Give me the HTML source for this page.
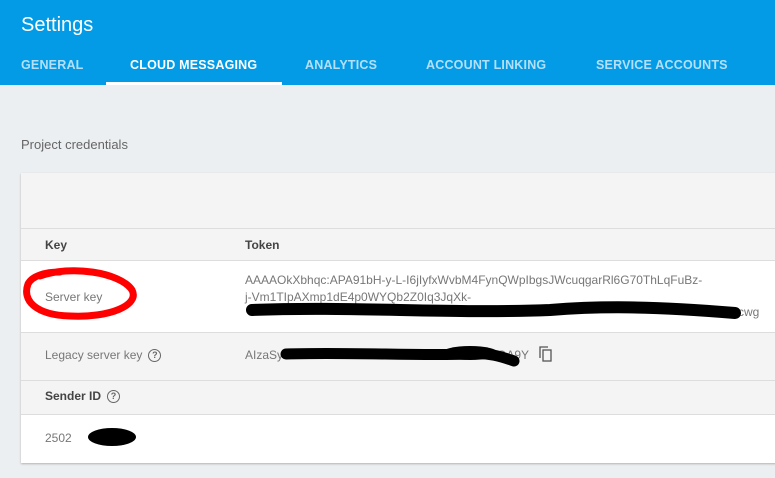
<!DOCTYPE html>
<html><head><meta charset="utf-8"><style>
*{margin:0;padding:0;box-sizing:border-box}
body{width:775px;height:478px;overflow:hidden;background:#eceff1;font-family:"Liberation Sans",sans-serif;position:relative}
.hdr{position:absolute;left:0;top:0;width:775px;height:85px;background:#039be5}
.title{position:absolute;left:21px;top:14px;color:#fff;font-size:20px}
.tab{position:absolute;top:58px;font-size:12.5px;font-weight:bold;color:#b3e0f8;letter-spacing:0.2px}
.ul{position:absolute;left:106px;top:82px;width:176px;height:3px;background:#fff}
.pc{position:absolute;left:21px;top:137px;font-size:13px;color:#666}
.card{position:absolute;left:21px;top:173px;width:760px;height:290px;background:#fff;box-shadow:0 1px 2px rgba(0,0,0,.25)}
.r{position:absolute;left:0;width:760px;border-bottom:1px solid #ddd}
.t{position:absolute;font-size:12px;color:#777}
.b{color:#444;font-weight:bold}
.q{display:inline-block;width:13px;height:13px;border:1.5px solid #666;border-radius:50%;font-size:9px;text-align:center;line-height:10px;color:#666;font-weight:bold;vertical-align:middle;margin-left:6px}
</style></head><body>
<div class="hdr">
<div class="title">Settings</div>
<div class="tab" style="left:21px">GENERAL</div>
<div class="tab" style="left:130px;color:#fff">CLOUD MESSAGING</div>
<div class="tab" style="left:305px">ANALYTICS</div>
<div class="tab" style="left:426px">ACCOUNT LINKING</div>
<div class="tab" style="left:596px">SERVICE ACCOUNTS</div>
<div class="ul"></div>
</div>
<div class="pc">Project credentials</div>
<div class="card">
<div class="r" style="top:0;height:56px;background:#f4f4f4"></div>
<div class="r" style="top:56px;height:32px;background:#f4f4f4"></div>
<div class="r" style="top:88px;height:72px;background:#fff"></div>
<div class="r" style="top:160px;height:48px;background:#f4f4f4"></div>
<div class="r" style="top:208px;height:34px;background:#f4f4f4"></div>
<div class="t b" style="left:24px;top:65px">Key</div>
<div class="t b" style="left:224px;top:65px">Token</div>
<div class="t" style="left:24px;top:117px">Server key</div>
<div class="t" style="left:224px;top:99px;line-height:17px;width:520px">AAAAOkXbhqc:APA91bH-y-L-I6jIyfxWvbM4FynQWpIbgsJWcuqgarRl6G70ThLqFuBz-<br>j-Vm1TIpAXmp1dE4p0WYQb2Z0Iq3JqXk-</div>
<div class="t" style="left:717px;top:132px">cwg</div>
<div class="t" style="left:224px;top:175px">AIzaSy</div>
<div class="t" style="left:462px;top:175px">T1QA9Y</div>
<div class="t" style="left:24px;top:175px">Legacy server key<span class="q">?</span></div>
<div class="t b" style="left:24px;top:216px">Sender ID<span class="q">?</span></div>
<div class="t" style="left:24px;top:258px">2502</div>
</div>
<svg style="position:absolute;left:0;top:0" width="775" height="478">
<path d="M40 276 C70 265 120 272 132 290 C140 305 110 318 70 316 C35 315 22 300 28 284 C32 276 45 272 60 272" fill="none" stroke="#f00" stroke-width="7" stroke-linecap="round"/>
<path d="M252 310 C350 306 450 314 550 310 C600 306 650 306 735 313" fill="none" stroke="#000" stroke-width="12" stroke-linecap="round"/>
<path d="M286 354 C350 352 420 356 470 354 C490 352 505 358 514 361" fill="none" stroke="#000" stroke-width="11" stroke-linecap="round"/>
<ellipse cx="470" cy="353" rx="28" ry="7" fill="#000"/>
<ellipse cx="112" cy="437" rx="24" ry="9" fill="#000"/>
<g fill="none" stroke="#555" stroke-width="1.3"><rect x="543" y="350" width="8" height="11"/><path d="M540 358 V347 H548"/></g>
</svg>
</body></html>
